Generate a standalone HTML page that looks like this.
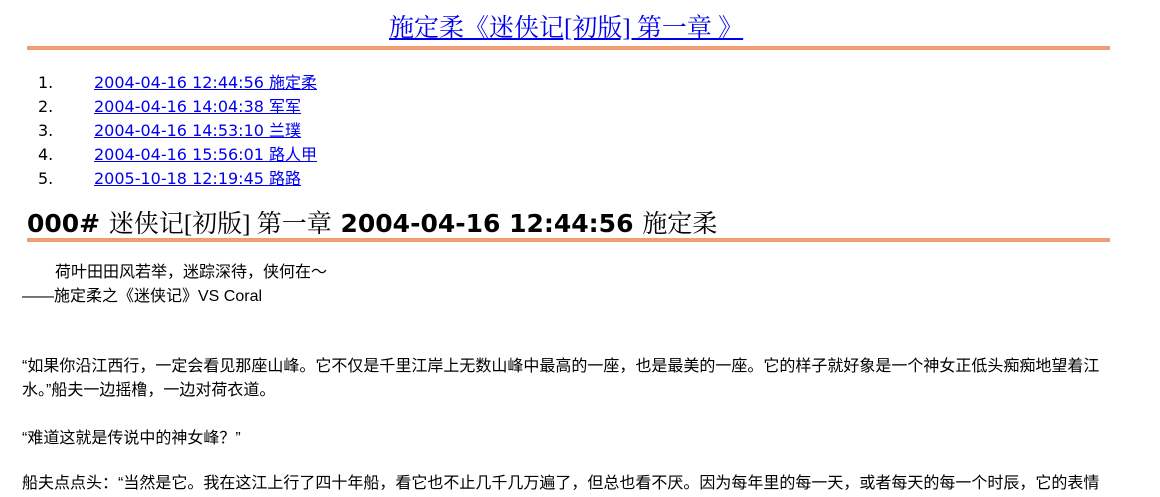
<!DOCTYPE html>
<html><head><meta charset="utf-8"><style>
body{margin:0;width:1160px;height:497px;overflow:hidden;background:#fff;font-family:"Liberation Sans","WenQuanYi Zen Hei","Noto Sans CJK SC",sans-serif;color:#000;}
.a{position:absolute;white-space:nowrap;}
a{color:#0000ee;text-decoration:underline;}
.rule{position:absolute;left:27px;width:1083px;height:4px;background:#ee9e72;}
.t{font-family:"Liberation Serif","Noto Serif CJK SC",serif;font-size:25px;}
.li{font-size:16px;line-height:24px;font-family:"DejaVu Sans","WenQuanYi Zen Hei",sans-serif;}
.p{font-size:16px;line-height:24px;left:22px;}
.s{font-weight:normal;font-family:"Liberation Serif","Noto Serif CJK SC",serif}
</style></head><body>
<div class="a t" style="left:389px;top:8px;"><a>施定柔《迷侠记[初版] 第一章 》</a></div>
<div class="rule" style="top:46px"></div>
<div class="a li" style="left:38px;top:71px;">1.</div><div class="a li" style="left:94px;top:71px;"><a>2004-04-16 12:44:56 施定柔</a></div>
<div class="a li" style="left:38px;top:95px;">2.</div><div class="a li" style="left:94px;top:95px;"><a>2004-04-16 14:04:38 军军</a></div>
<div class="a li" style="left:38px;top:119px;">3.</div><div class="a li" style="left:94px;top:119px;"><a>2004-04-16 14:53:10 兰璞</a></div>
<div class="a li" style="left:38px;top:143px;">4.</div><div class="a li" style="left:94px;top:143px;"><a>2004-04-16 15:56:01 路人甲</a></div>
<div class="a li" style="left:38px;top:167px;">5.</div><div class="a li" style="left:94px;top:167px;"><a>2005-10-18 12:19:45 路路</a></div>
<div class="a" style="left:27px;top:204px;font-size:25px;font-weight:bold;font-family:'DejaVu Sans',sans-serif;"><b>000#</b> <span class="s">迷侠记[初版] 第一章</span> <b>2004-04-16 12:44:56</b> <span class="s">施定柔</span></div>
<div class="rule" style="top:238px"></div>
<div class="a p" style="top:261px;left:55px;">荷叶田田风若举，迷踪深待，侠何在～</div>
<div class="a p" style="top:285px;">——施定柔之《迷侠记》VS Coral</div>
<div class="a p" style="top:355px;">“如果你沿江西行，一定会看见那座山峰。它不仅是千里江岸上无数山峰中最高的一座，也是最美的一座。它的样子就好象是一个神女正低头痴痴地望着江</div>
<div class="a p" style="top:379px;">水。”船夫一边摇橹，一边对荷衣道。</div>
<div class="a p" style="top:427px;">“难道这就是传说中的神女峰？”</div>
<div class="a p" style="top:472px;">船夫点点头：“当然是它。我在这江上行了四十年船，看它也不止几千几万遍了，但总也看不厌。因为每年里的每一天，或者每天的每一个时辰，它的表情</div>
</body></html>
